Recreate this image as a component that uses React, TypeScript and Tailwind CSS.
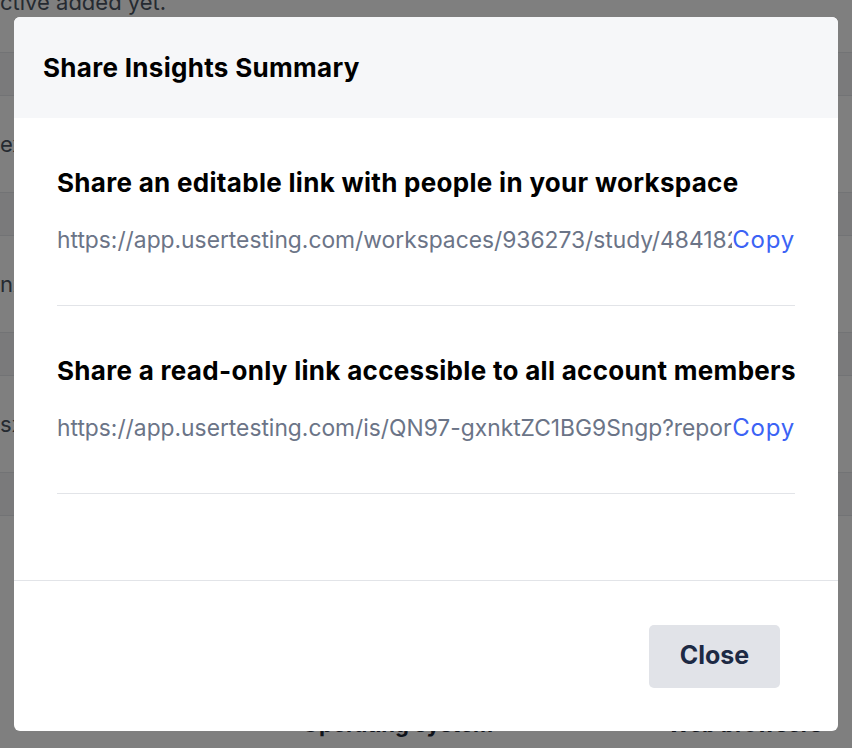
import React from 'react'

const links = [
  {
    title: 'Share an editable link with people in your workspace',
    url: 'https://app.usertesting.com/workspaces/936273/study/4841822/insights',
  },
  {
    title: 'Share a read-only link accessible to all account members',
    url: 'https://app.usertesting.com/is/QN97-gxnktZC1BG9Sngp?report=summary',
  },
]

const rows = ['e', 'n', 's']

export default function App() {
  return (
    <div className="relative h-[748px] w-[852px] overflow-hidden bg-white font-['Inter',sans-serif]">
      {/* Page behind the modal */}
      <div className="-mt-[14px] h-[66px] text-[22px] leading-[32px] text-[#4b5563]">ctive added yet.</div>
      {rows.map((r) => (
        <div key={r}>
          <div className="h-[44px] border-y border-[#e5e7eb] bg-[#f4f5f7]" />
          <div className="flex h-[96px] items-center text-[22px] text-[#4b5563]">{r}xxxx</div>
        </div>
      ))}
      <div className="h-[44px] border-y border-[#e5e7eb] bg-[#f4f5f7]" />
      <div className="flex pt-[192px] text-[22px] font-bold text-[#1f2937]">
        <span className="ml-[302px]">Operating system</span>
        <span className="ml-auto mr-[30px]">Web browsers</span>
      </div>

      {/* Overlay */}
      <div className="absolute inset-0 bg-black/50">
        <div className="ml-[14px] mt-[17px] flex h-[714px] w-[824px] flex-col overflow-hidden rounded-[6px] bg-white">
          <div className="flex h-[101px] shrink-0 items-center bg-[#f6f7f9] px-[29px]">
            <h2 className="text-[26px] font-bold tracking-[0.3px] text-black">Share Insights Summary</h2>
          </div>

          <div className="px-[43px] pb-[86px]">
            {links.map((l) => (
              <div key={l.title} className="border-b border-[#e2e4e8] pb-[49px] pt-[49px]">
                <h3 className="whitespace-nowrap text-[26px] font-bold leading-[32px] tracking-[0.3px] text-black">
                  {l.title}
                </h3>
                <div className="mt-[25px] flex items-baseline leading-[32px]">
                  <span className="min-w-0 flex-1 overflow-hidden whitespace-nowrap text-[22.8px] text-[#6b7487]">
                    {l.url}
                  </span>
                  <button className="shrink-0 text-[24px] tracking-[0.8px] text-[#3b63f5]">Copy</button>
                </div>
              </div>
            ))}
          </div>

          <div className="flex flex-1 items-center justify-end border-t border-[#e2e4e8] pr-[58px]">
            <button className="h-[63px] w-[131px] rounded-[5px] bg-[#e1e3e8] text-[25px] font-bold text-[#1d2a44]">
              Close
            </button>
          </div>
        </div>
      </div>
    </div>
  )
}
